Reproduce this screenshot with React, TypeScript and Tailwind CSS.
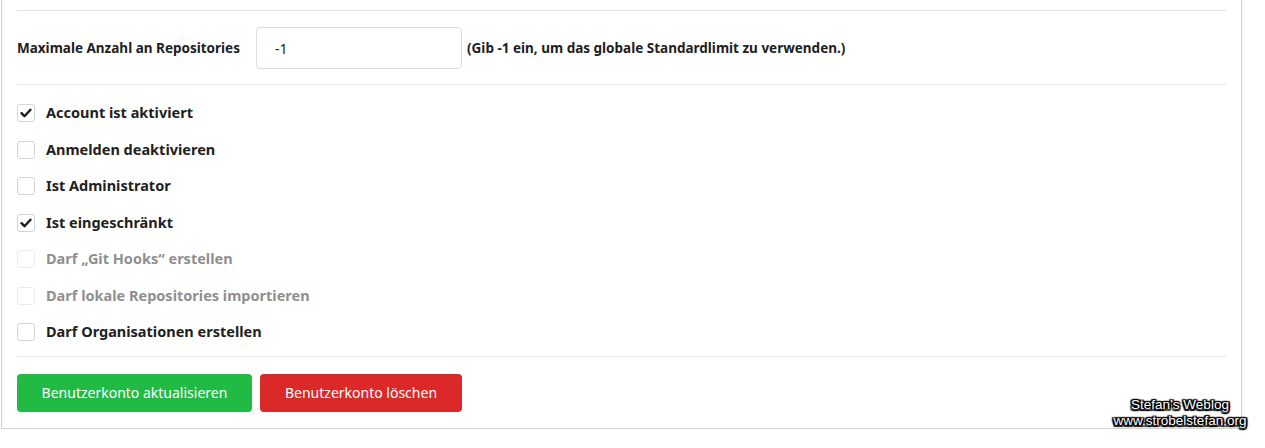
import React from 'react';

type Flag = { label: string; checked: boolean; disabled?: boolean };

const FLAGS: Flag[] = [
  { label: 'Account ist aktiviert', checked: true },
  { label: 'Anmelden deaktivieren', checked: false },
  { label: 'Ist Administrator', checked: false },
  { label: 'Ist eingeschränkt', checked: true },
  { label: 'Darf „Git Hooks“ erstellen', checked: false, disabled: true },
  { label: 'Darf lokale Repositories importieren', checked: false, disabled: true },
  { label: 'Darf Organisationen erstellen', checked: false },
];

function Checkbox({ checked, disabled }: { checked: boolean; disabled?: boolean }) {
  return (
    <span
      className={`flex h-[18px] w-[18px] items-center justify-center rounded-[3px] border bg-white ${
        disabled ? 'border-[#ececec]' : 'border-[#d4d4d5]'
      }`}
    >
      {checked && (
        <svg width="12" height="10" viewBox="0 0 12 10">
          <path d="M1.5 5.2 L4.5 8.2 L10.5 1.8" fill="none" stroke="#1b1c1d" strokeWidth="2.4" strokeLinecap="round" strokeLinejoin="round" />
        </svg>
      )}
    </span>
  );
}

export default function App() {
  return (
    <div className="relative h-[448px] w-[1265px] overflow-hidden bg-white font-['Noto_Sans',sans-serif] text-[#212121]">
      <div className="ml-px w-[1241px] border-x border-b border-[#d4d4d5] px-[15px] pt-[10px] pb-[16px]">
        {/* repo limit */}
        <div className="flex items-center border-y border-[#e3e3e3] pt-4 pb-[15px]">
          <label className="w-[239px] text-[13.5px] font-bold">Maximale Anzahl an Repositories</label>
          <input
            defaultValue="-1"
            className="h-[42px] w-[206px] rounded-[4px] border border-[#dedede] px-[18px] text-[14px] text-[#212121] outline-none"
          />
          <span className="ml-[5px] text-[13.5px] font-bold">(Gib -1 ein, um das globale Standardlimit zu verwenden.)</span>
        </div>

        {/* flags */}
        <div className="flex flex-col pt-[10px] pb-[5px]">
          {FLAGS.map((f) => (
            <div key={f.label} className="flex h-[36.5px] items-center gap-[11px]">
              <Checkbox checked={f.checked} disabled={f.disabled} />
              <span className={`text-[14.5px] font-bold ${f.disabled ? 'text-[#8f8f8f]' : 'text-[#212121]'}`}>{f.label}</span>
            </div>
          ))}
        </div>

        {/* actions */}
        <div className="flex gap-2 border-t border-[#e3e3e3] pt-[17px]">
          <button className="h-[38px] w-[235px] rounded-[4px] bg-[#21ba45] text-[14px] text-white">Benutzerkonto aktualisieren</button>
          <button className="h-[38px] w-[202px] rounded-[4px] bg-[#db2828] text-[14px] text-white">Benutzerkonto löschen</button>
        </div>
      </div>

      <div className="absolute top-[397px] left-[1112px] w-[136px] text-center font-['Liberation_Sans',sans-serif] text-[13.5px] leading-[16px] text-white [text-shadow:0_0_2px_#000,1.5px_1.5px_1px_#000,-1.5px_-1.5px_1px_#000,1.5px_-1.5px_1px_#000,-1.5px_1.5px_1px_#000,0_1.5px_1px_#000,0_-1.5px_1px_#000,1.5px_0_1px_#000,-1.5px_0_1px_#000]">
        <div>Stefan’s Weblog</div>
        <div>www.strobelstefan.org</div>
      </div>
    </div>
  );
}
